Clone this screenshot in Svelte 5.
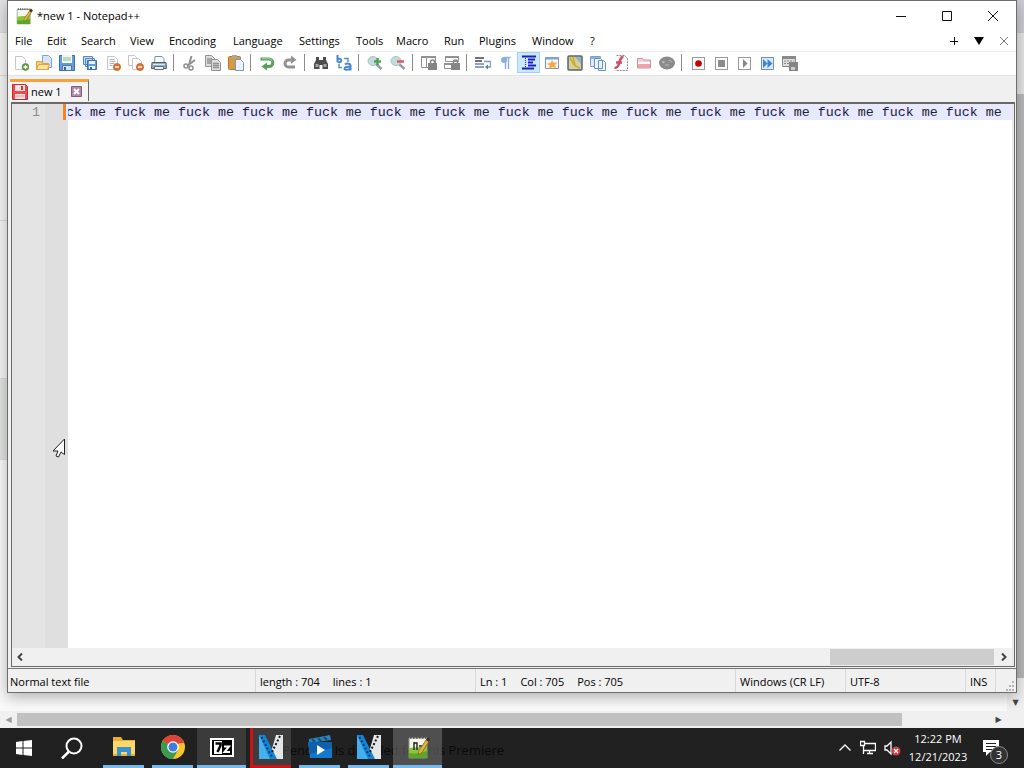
<script lang="ts">
	import { onMount } from 'svelte';

	const menus = [
		'File',
		'Edit',
		'Search',
		'View',
		'Encoding',
		'Language',
		'Settings',
		'Tools',
		'Macro',
		'Run',
		'Plugins',
		'Window',
		'?',
	];

	const page = '<path d="M2.5 1.5h7l3 3v10h-10z" fill="#fdfdfd" stroke="#c4c7cb"/>';
	const minus =
		'<circle cx="12" cy="12" r="3.6" fill="#e0752d" stroke="#a9511c" stroke-width=".6"/><path d="M10 12h4" stroke="#fff" stroke-width="1.4"/>';
	const lens =
		'<path d="M9 9l5.500 5" stroke="#9a9ca8" stroke-width="2.500"/><ellipse cx="6" cy="6" rx="5" ry="4.500" fill="#c3dbdc" stroke="#a9c4c8"/>';
	const lock =
		'<rect x="7" y="8" width="9" height="7" fill="#858585"/><path d="M9.500 8V7a2 2 0 0 1 4 0v1" fill="none" stroke="#858585" stroke-width="1.500"/>';
	const frame = '<rect x="2.500" y="2.500" width="12" height="12" fill="#fff" stroke="#9a9a9a"/>';

	const groups = [
		[
			{
				name: 'New',
				art:
					page +
					'<circle cx="12.500" cy="12" r="3.400" fill="#69a04a" stroke="#47752f" stroke-width=".6"/><path d="M10.500 12h4M12.500 10v4" stroke="#fff" stroke-width="1.300"/>',
			},
			{
				name: 'Open',
				art: '<path d="M6.500.5h6l3 3v9h-9z" fill="#d6e5fb" stroke="#7fa4dc"/><path d="M.5 6.500h5l1 2h6v6H.5z" fill="#f7d171" stroke="#dda43b"/><path d="M.5 14.500l2-5h11l-2 5z" fill="#fde69b" stroke="#dda43b"/>',
			},
			{
				name: 'Save',
				art: '<path d="M.5 .5h15v15H.5z" fill="#659bd6" stroke="#3d6fae"/><path d="M3 0h10v8H3z" fill="#edf5ff"/><path d="M4 3h8M4 5h8" stroke="#8bbf68"/><path d="M3.500 10.500h9v5h-9z" fill="#d2e4f4" stroke="#4776a8"/><path d="M5 12h2v3H5z" fill="#33639f"/>',
			},
			{
				name: 'Save All',
				art: '<path d="M1.500 1.500h9v8h-9zM3.500 3.500h9v8h-9z" fill="#c4daf2" stroke="#5688c3"/><path d="M5.500 5.500h9v9h-9z" fill="#659bd6" stroke="#3d6fae"/><path d="M7 6h6v3H7zM7 11h6v3H7z" fill="#e7f2fb"/><path d="M8 12h2v2H8z" fill="#33639f"/>',
			},
			{
				name: 'Close',
				art: page + '<path d="M4.500 4.500h5M4.500 6.500h6M4.500 8.500h5M4.500 10.500h3" stroke="#b0b4ba"/>' + minus,
			},
			{
				name: 'Close All',
				art:
					'<path d="M.5.5h6l2 2v8h-8z" fill="#fff" stroke="#c4c7cb"/><path d="M4.500 3.500h6l3 3v8h-9z" fill="#fff" stroke="#c4c7cb"/>' +
					minus,
			},
			{
				name: 'Print',
				art: '<path d="M4 1.500h7l2 2v5H3.500z" fill="#f8fbff" stroke="#7792ad"/><path d="M1 7.500h14l.5 6H.5z" fill="#9aabba" stroke="#51606f"/><path d="M2 9.500h12" stroke="#dce6ef"/><path d="M3.500 11.500h9v3h-9z" fill="#e8f1fa" stroke="#5b718a"/>',
			},
		],
		[
			{
				name: 'Cut',
				art: '<path d="M9.500 1L7 10M13 5l-8 6" stroke="#929292" stroke-width="2"/><circle cx="4" cy="11" r="2" fill="none" stroke="#929292" stroke-width="1.600"/><circle cx="9" cy="13" r="2" fill="none" stroke="#929292" stroke-width="1.600"/>',
			},
			{
				name: 'Copy',
				art: '<path d="M.5 .5h6l3 3v8h-9z" fill="#ddd" stroke="#929292"/><path d="M2 4h5M2 6h5M2 8h4" stroke="#929292" stroke-width="1.500"/><path d="M6.500 4.500h6l3 3v8h-9z" fill="#ddd" stroke="#929292"/><path d="M8 8.500h6M8 10.500h6M8 12.500h6" stroke="#929292" stroke-width="1.500"/>',
			},
			{
				name: 'Paste',
				art: '<rect x=".5" y="1.500" width="12" height="13" rx="1" fill="#d99a45" stroke="#b8772a"/><path d="M4 0h5v3H4z" fill="#a8a8a8"/><path d="M7.500 4.500h5l3 3v8h-8z" fill="#eaf3ff" stroke="#7898c4"/>',
			},
		],
		[
			{
				name: 'Undo',
				art: '<path d="M1.500 4h8.500a3.800 3.800 0 0 1 0 7.600H7" fill="none" stroke="#58a058" stroke-width="3"/><path d="M8 7.500v8L2.500 11.500z" fill="#58a058"/><path d="M3 3.700h7a3.500 3.500 0 0 1 3.300 2.500" fill="none" stroke="#a0d39a"/>',
			},
			{
				name: 'Redo',
				art: '<path d="M13 12H6.500a3.500 3.500 0 0 1 0-7H10" fill="none" stroke="#929292" stroke-width="3"/><path d="M9 .5v8.500l5.500-4.200z" fill="#929292"/>',
			},
		],
		[
			{
				name: 'Find',
				art: '<path d="M3 2h3v3h4V2h3v3l2 4v5H9.500v-4h-3v4H1V9l2-4z" fill="#4c4c4c"/><path d="M2.500 9h3v3h-3zM10.500 9h3v3h-3z" fill="#a5a5a5"/>',
			},
			{
				name: 'Replace',
				art: '<path d="M1.500 0v7M1.500 4.500a2 1.800 0 1 1 0 2M9 9.500c2-1.500 5.500-1 5.500 1v5M14.500 12c-3-.5-6 0-6 1.700s4.500 1.500 6-.7" fill="none" stroke="#4a86d1" stroke-width="2"/><path d="M8 3.500h4V7M3 9v3.500h3" fill="none" stroke="#5e96a9" stroke-width="1.500"/>',
			},
		],
		[
			{ name: 'Zoom In', art: lens + '<path d="M7 6.500h7M10.500 3v7" stroke="#4fa356" stroke-width="2.500"/>' },
			{ name: 'Zoom Out', art: lens + '<path d="M7 6.500h7" stroke="#e0596b" stroke-width="2.500"/>' },
		],
		[
			{
				name: 'Synchronize Vertical Scrolling',
				art: '<path d="M.5 1.500h14v11H.5zM5.500 2v10" fill="#fff" stroke="#929292"/><path d="M0 1h15v2H0z" fill="#929292"/>' + lock,
			},
			{
				name: 'Synchronize Horizontal Scrolling',
				art: '<path d="M1.500 1.500h13v5h-13zM.5 8.500h12v5H.5z" fill="#fff" stroke="#929292"/><path d="M1 1h14v2H1zM0 8h9v2H0z" fill="#929292"/>' + lock,
			},
		],
		[
			{
				name: 'Word wrap',
				art: '<path d="M0 3h9M0 6h7" stroke="#444" stroke-width="1.300"/><path d="M0 9h9M0 12h9" stroke="#6b86ad" stroke-width="1.300"/><path d="M9 6.500h6.500V12H12" fill="none" stroke="#7a9cc8" stroke-width="1.300"/><path d="M13 9.500v5L10 12z" fill="#5880b5"/>',
			},
			{
				name: 'Show All Characters',
				art: '<path d="M7.500 2v12M10.500 2v12M6 2.500h6.500" stroke="#8ab1de" stroke-width="1.500"/><circle cx="6" cy="5" r="3" fill="#8ab1de"/>',
			},
			{
				name: 'Show Indent Guide',
				art: '<path d="M1 1.500h14M7 4.500h7M7 7.500h5M7 10.500h8M1 13.500h12" stroke="#1820c4" stroke-width="1.800"/><path d="M4.500 3v10" stroke="#333" stroke-dasharray="1 1"/>',
				pressed: true,
			},
			{
				name: 'User Defined Language',
				art: '<path d="M1.500 2.500h13v11h-13z" fill="#f4f7fc" stroke="#7f93b2"/><path d="M1 2h14v2.500H1z" fill="#7fa3d8"/><path d="M8 5l1.500 2.500h4L11 10l1 3-3.500-1L5 14l.5-3.500L3 8.500l3.500-.5z" fill="#f4ad3c"/>',
			},
			{
				name: 'Document Map',
				art: '<rect x="1" y="1" width="14" height="14" rx="1" fill="#d3d29a" stroke="#56656a" stroke-width="1.500"/><path d="M8 2h6v7z" fill="#8eb3cf"/><path d="M3 3l5 8 5 2M6 2l2 8" fill="none" stroke="#d6a62a" stroke-width="1.500"/>',
			},
			{
				name: 'Document List',
				art: '<path d="M.5 1.500h10v10H.5z" fill="#dbe9fa" stroke="#7f9fc9"/><path d="M1 2h10v2H1z" fill="#8eb2de"/><path d="M4.500 3.500h6l2 2v8h-8zM8.500 5.500h5l2 2v8h-7z" fill="#edf5ff" stroke="#6992c8"/>',
			},
			{
				name: 'Function List',
				art: '<path d="M3.500 .5h8l3 3v12h-12" fill="#fff" stroke="#8b8b8b" stroke-dasharray="2 1"/><path d="M10.500 2c-3-.5-3 2-4 5s-1 6-5 6M3 7.500h6" fill="none" stroke="#d34e60" stroke-width="2.500"/>',
			},
			{
				name: 'Folder as Workspace',
				art: '<path d="M1.500 3.500h5l1 1.500h7v8h-13z" fill="#f7cfd4" stroke="#cc9299"/><path d="M2 7h12v2H2z" fill="#fff"/><path d="M2 9h12v4H2z" fill="#eda2ac"/>',
			},
			{
				name: 'Monitoring',
				art: '<ellipse cx="8" cy="8" rx="8" ry="6.500" fill="#8b8b8b"/><path d="M3 7l2-1v2zM10 5l3 2M6 10h4" fill="none" stroke="#b9b9b9"/>',
			},
		],
		[
			{ name: 'Start Recording', art: frame + '<circle cx="8.500" cy="8.500" r="3.300" fill="#c40000"/>' },
			{ name: 'Stop Recording', art: frame + '<path d="M5 5h7v7H5z" fill="#8c8c8c"/>' },
			{ name: 'Playback', art: frame + '<path d="M7 4v9l4.500-4.500z" fill="#858585"/>' },
			{
				name: 'Run a Macro Multiple Times',
				art: '<path d="M2.500 2.500h12v12h-12z" fill="#dcebfb" stroke="#6f8fb8"/><path d="M4 4v9l4.500-4.500zM8.500 4v9l5-4.500z" fill="#3d83d8"/>',
			},
			{
				name: 'Save Current Recorded Macro',
				art: '<path d="M.5 1.500h13v10H.5z" fill="#ddd" stroke="#8a8a8a"/><path d="M0 1h14v3H0z" fill="#8a8a8a"/><path d="M2 6h10M2 8.500h6" stroke="#8a8a8a" stroke-dasharray="2 1"/><path d="M7 7h9v9H7z" fill="#858585"/><path d="M9 12h4v3H9z" fill="#ccc"/>',
			},
		],
	];

	const notepad =
		'<path d="M3 3h18v20H3z" fill="#f3f6ec" stroke="#8d9880"/><path d="M3 13c6-1 12 0 18-3v13H3z" fill="#8cc63a"/><path d="M3 18c6 1 12 0 18-2v7H3z" fill="#5ea52a"/><path d="M4 2.500h16" stroke="#555" stroke-width="2.500" stroke-dasharray="1.500 1.500"/>';
	const pencil =
		'<path d="M22 2l2.500 2-9 14-3.500 1.500 1-4z" fill="#e9b33c" stroke="#7b6428" stroke-width=".8"/><path d="M22 2l2.500 2-2 3-2.500-2z" fill="#333"/>';
	const film =
		'<path d="M17 0h7v24H10z" fill="#e3e5e6"/><path d="M0 0h6l12 24H0z" fill="#1583d6"/><path d="M0 0l11 24H0z" fill="#45b0f0"/><path d="M2.500 2l11 21" stroke="#0a3a62" stroke-width="2" stroke-dasharray="2 2"/><path d="M21 1l-8 16" stroke="#16191b" stroke-width="2" stroke-dasharray="2 2"/>';

	const apps = [
		{
			name: 'File Explorer',
			state: 'open',
			art: '<path d="M1 2h8l2 3h12v16H1z" fill="#e9ae35"/><path d="M1 6h22v13H1z" fill="#fbd867"/><path d="M5 12h14v9h-4v-4H9v4H5z" fill="#3e91cf"/>',
		},
		{
			name: 'Google Chrome',
			state: 'open',
			art: '<circle cx="12" cy="12" r="12" fill="#f8c727"/><path d="M12 12L1.600 6a12 12 0 0 1 20.800 0z" fill="#dd4437"/><path d="M12 12L1.600 6A12 12 0 0 0 12 24l5-9z" fill="#3a9a50"/><path d="M11 6h11.400L23 8H12z" fill="#dd4437"/><circle cx="12" cy="12" r="5.800" fill="#fff"/><circle cx="12" cy="12" r="4.500" fill="#3e7de0"/>',
		},
		{
			name: '7-Zip',
			state: 'open lit',
			art: '<path d="M1 4h22v17H1z" fill="#000" stroke="#fff" stroke-width="2"/><path d="M4 6h8v13H4z" fill="#fff"/><path d="M5.500 8.500h5v2L7.500 17" fill="none" stroke="#000" stroke-width="2.500"/><path d="M14 11.500h5l-4.500 5.500H20" fill="none" stroke="#fff" stroke-width="2"/>',
		},
		{ name: 'Video Editor', state: 'alert', art: film },
		{
			name: 'Video Player',
			state: 'open',
			art: '<path d="M1 4l21-4 1 5L1 8z" fill="#2a83bc"/><path d="M4 4l3 3M10 3l3 3M16 2l3 3" stroke="#14507d" stroke-width="2"/><path d="M0 7h24v16H2z" fill="#1478cc"/><path d="M0 7h24v6L2 19z" fill="#0e60aa"/><path d="M9 10v10l8-5z" fill="#fff"/>',
		},
		{ name: 'Video Editor 2', state: 'open', art: film },
		{
			name: 'Notepad++',
			state: 'open active',
			art: notepad + '<path d="M8 7v8M8 8h3v7M13 11h3M17 11h3" fill="none" stroke="#222" stroke-width="1.400"/>' + pencil,
		},
	];

	const text = 'fuck me '.repeat(88);
	let editor: HTMLTextAreaElement;

	onMount(() => {
		editor.scrollLeft = editor.scrollWidth;
	});
</script>

<div class="screen">
	<main class="desktop">
		<div class="backdrop">
			<div class="panes">
				<div class="left-pane"><i></i><i></i><i></i><i></i><i></i></div>
				<div class="back-scroll"><i></i><i></i><span>▼</span></div>
			</div>
			<div class="back-hscroll">
				<span class="dim">◀</span>
				<div class="track"><div class="thumb"></div></div>
				<span>▶</span>
			</div>
		</div>

		<section class="window">
			<header class="title">
				<svg viewBox="0 0 25 24" width="18" height="18">{@html notepad + pencil}</svg>
				<h1>*new 1 - Notepad++</h1>
				<button aria-label="Minimize"><svg width="12" height="12"><path d="M1 6.500h10" /></svg></button>
				<button aria-label="Maximize"><svg width="12" height="12"><path d="M1.500 1.500h9v9h-9z" /></svg></button>
				<button aria-label="Close window"><svg width="12" height="12"><path d="M1 1l10 10M11 1L1 11" /></svg></button>
			</header>

			<nav class="menu">
				{#each menus as menu}
					<button>{menu}</button>
				{/each}
				<div class="menu-end">
					<button aria-label="New tab"><svg width="10" height="10"><path d="M1 5.500h8M5.500 1v8" /></svg></button>
					<button aria-label="Tab list"><svg width="10" height="10"><path class="solid" d="M0 1h10L5 9z" /></svg></button>
					<button aria-label="Close tab" class="faded"><svg width="10" height="10"><path d="M1 1l8 8M9 1L1 9" /></svg></button>
				</div>
			</nav>

			<div class="toolbar">
				{#each groups as tools}
					<div class="group">
						{#each tools as tool}
							<button aria-label={tool.name} class:pressed={tool.pressed}>
								<svg viewBox="0 0 16 16" width="16" height="16">{@html tool.art}</svg>
							</button>
						{/each}
					</div>
				{/each}
			</div>

			<div class="tabs">
				<div class="tab">
					<svg viewBox="0 0 16 16" width="16" height="16">
						<path d="M.5.5h13l2 2v13H.5z" fill="#ef4b4f" stroke="#c52a30" />
						<path d="M3 1h10v6H3zM3 10h10v5H3z" fill="#fbe3e3" />
						<path d="M9 2h2v4H9z" fill="#d33" />
						<path d="M4 12h8" stroke="#ef8a8a" />
					</svg>
					<span>new 1</span>
					<button aria-label="Close new 1">
						<svg viewBox="0 0 11 11" width="11" height="11">
							<path d="M.5.5h10v10H.5z" fill="#b08aa6" stroke="#865a7d" />
							<path d="M3 3l5 5M8 3L3 8" stroke="#fff" stroke-width="2" />
						</svg>
					</button>
				</div>
			</div>

			<div class="editor">
				<div class="code">
					<div class="gutter"><span>1</span></div>
					<div class="fold"><i></i></div>
					<textarea bind:this={editor} aria-label="new 1" wrap="off" spellcheck="false" value={text}></textarea>
				</div>
				<div class="hscroll">
					<svg width="6" height="8"><path d="M5 0.500L1.500 4L5 7.500" /></svg>
					<div class="track"><div class="thumb"></div></div>
					<svg width="6" height="8"><path d="M1 0.500L4.500 4L1 7.500" /></svg>
				</div>
			</div>

			<footer class="status">
				<span class="type">Normal text file</span>
				<span class="size"><span>length : 704</span><span>lines : 1</span></span>
				<span class="pos"><span>Ln : 1</span><span>Col : 705</span><span>Pos : 705</span></span>
				<span class="eol">Windows (CR LF)</span>
				<span class="enc">UTF-8</span>
				<span class="ins">INS</span>
				<svg class="grip" width="12" height="12">
					<path d="M8 2h2M5 6h2M8 6h2M2 10h2M5 10h2M8 10h2" stroke="#b5b5b5" stroke-width="2" />
				</svg>
			</footer>
		</section>

		<svg class="pointer" viewBox="0 0 14 20" width="14" height="20">
			<path d="M12.500 1v15.500l-3.500-2.500-2.500 5-2.500-1 2-5H1z" fill="#fff" stroke="#222" />
		</svg>
	</main>

	<footer class="taskbar">
		<button class="start" aria-label="Start">
			<svg viewBox="0 0 16 16" width="16" height="16">
				<path d="M0 2l6.500-1v6.500H0zM7.500.9L16 0v7.500H7.500zM0 8.500h6.500V15L0 14zM7.500 8.500H16V16l-8.500-1z" fill="#fff" />
			</svg>
		</button>
		<button class="search" aria-label="Search">
			<svg viewBox="0 0 22 22" width="22" height="22">
				<circle cx="13" cy="9" r="7.500" fill="none" stroke="#fff" stroke-width="2" />
				<path d="M8 14.500L1 21.500" stroke="#fff" stroke-width="2.500" />
			</svg>
		</button>
		<div class="apps">
			<span class="ghost">Pending is disabled for this Premiere</span>
			{#each apps as app}
				<button class="app {app.state}" aria-label={app.name}>
					<svg viewBox="0 0 24 24" width="24" height="24">{@html app.art}</svg>
				</button>
			{/each}
		</div>
		<div class="tray">
			<svg width="14" height="10"><path d="M1.500 7.500L7 2l5.500 5.500" /></svg>
			<svg width="16" height="16">
				<path d="M5 3.500h10.500v7H3.500V6M7 13.500h6M9.500 11v2M.5 1.500h4v4h-4zM3.500 10v4" />
			</svg>
			<svg width="17" height="16">
				<path d="M1 6h2l4-4v12l-4-4H1z" />
				<circle cx="12" cy="11" r="4.500" fill="#d13a48" stroke="none" />
				<path d="M10 9l4 4M14 9l-4 4" />
			</svg>
		</div>
		<div class="clock"><time>12:22 PM</time><time>12/21/2023</time></div>
		<button class="notes" aria-label="3 notifications">
			<svg width="18" height="18">
				<path d="M1 1h16v12H8l-4 4v-4H1z" fill="#fff" />
				<path d="M4 4.500h10M4 7.500h10M4 10.500h6" stroke="#222" />
			</svg>
			<span>3</span>
		</button>
	</footer>
</div>

<style>
	:global(body) {
		margin: 0;
		overflow: hidden;
	}
	.screen {
		display: flex;
		flex-direction: column;
		height: 100vh;
		font: 11px/16px 'Open Sans', 'Noto Sans', sans-serif;
		color: #000;
		background: #f2f2f2;
	}
	button {
		display: flex;
		align-items: center;
		justify-content: center;
		padding: 0;
		border: 0;
		background: none;
		font: inherit;
		color: inherit;
	}
	svg {
		display: block;
		flex: none;
	}

	.desktop {
		position: relative;
		flex: 1;
		min-height: 0;
	}
	.backdrop {
		display: flex;
		flex-direction: column;
		height: 100%;
	}
	.panes {
		flex: 1;
		display: flex;
		justify-content: space-between;
		background: #fafafa;
	}
	.left-pane {
		width: 8px;
		display: grid;
		grid-template-rows: 33px 43px 145px 158px 81px;
	}
	.left-pane i {
		border-bottom: 1px solid #dcdcdc;
		background: #f6f7f5;
	}
	.left-pane i:first-child {
		background: #e2e2e4;
	}
	.left-pane i:last-child {
		background: #e2e4e2;
	}
	.back-scroll {
		width: 17px;
		display: grid;
		grid-template-rows: 94px 1fr 33px;
		background: #f0f0f0;
	}
	.back-scroll i:first-child {
		background: linear-gradient(#ccccd2 33px, #e6e6e6 33px);
	}
	.back-scroll i:nth-child(2) {
		background: #b9b9b9;
	}
	.back-scroll span,
	.back-hscroll span {
		font: 8px/17px 'DejaVu Sans', sans-serif;
		text-align: center;
		color: #444;
	}
	.back-scroll span {
		align-self: end;
	}
	.back-hscroll {
		display: grid;
		grid-template-columns: 17px 1fr 17px 17px;
		height: 17px;
		background: #f0f0f0;
	}
	.back-hscroll .dim {
		color: #999;
	}
	.back-hscroll .thumb {
		width: 91%;
		height: 13px;
		margin-top: 2px;
		background: #c1c1c1;
	}

	.window {
		position: absolute;
		inset: 0 7px 35px;
		display: flex;
		flex-direction: column;
		border: 1px solid #6d6d6d;
		background: #f0f0f0;
		box-shadow: 0 4px 14px rgba(0, 0, 0, 0.3);
	}
	.title {
		display: flex;
		align-items: center;
		height: 29px;
		padding-left: 7px;
		background: #fff;
	}
	.title h1 {
		flex: 1;
		margin: 0 0 0 4px;
		font-size: 11px;
		font-weight: 400;
	}
	.title button {
		width: 46px;
		height: 29px;
	}
	.title button svg,
	.menu svg {
		fill: none;
		stroke: #111;
	}
	.menu {
		display: grid;
		grid-template-columns: 32px 34px 49px 39px 64px 66px 57px 40px 48px 35px 53px 58px 20px 1fr;
		align-items: center;
		height: 21px;
		padding-left: 7px;
		background: #fff;
		border-bottom: 1px solid #eee;
	}
	.menu > button {
		justify-content: flex-start;
	}
	.menu-end {
		display: flex;
		justify-content: flex-end;
	}
	.menu-end button {
		width: 25px;
	}
	.menu .solid {
		fill: #000;
		stroke: none;
	}
	.menu .faded svg {
		stroke: #777;
	}

	.toolbar {
		display: flex;
		align-items: flex-start;
		height: 23px;
		padding-left: 1px;
		background: #fff;
		border-bottom: 1px solid #e2e2e2;
	}
	.group {
		display: flex;
		align-items: center;
	}
	.group + .group::before {
		content: '';
		width: 1px;
		height: 17px;
		margin: 0 4px 0 3px;
		background: #8b8b8b;
	}
	.group button {
		width: 23px;
		height: 21px;
	}
	.group .pressed {
		background: #cce8ff;
		box-shadow: inset 0 0 0 1px #99d1ff;
	}

	.tabs {
		display: flex;
		align-items: flex-start;
		height: 23px;
		padding: 3px 0 0 2px;
	}
	.tab {
		display: flex;
		align-items: center;
		gap: 3px;
		width: 76px;
		height: 19px;
		padding-left: 2px;
		border-top: 3px solid #f9a03c;
		border-right: 1px solid #696969;
		background: #f4f4f4;
	}
	.tab span {
		flex: 1;
	}
	.tab button {
		margin-right: 6px;
	}

	.editor {
		flex: 1;
		display: flex;
		flex-direction: column;
		min-height: 0;
		margin: 0 1px 1px 3px;
		border: 1px solid #696969;
		border-top-width: 2px;
		padding-right: 2px;
		background: #e9e9e9;
	}
	.code {
		flex: 1;
		display: flex;
		min-height: 0;
		background: linear-gradient(#e8e8ff 16px, #fff 16px);
	}
	.gutter {
		width: 28px;
		padding-right: 5px;
		background: #e4e4e4;
		font: 10pt/18px 'Liberation Mono', monospace;
		text-align: right;
		color: #8d8d8d;
	}
	.fold {
		width: 23px;
		background: #dfdfdf;
	}
	.fold i {
		display: block;
		width: 3px;
		height: 16px;
		margin-left: 18px;
		border-right: 2px solid #e8e8ff;
		background: #f0852a;
	}
	textarea {
		flex: 1;
		min-width: 0;
		margin-right: 2px;
		padding: 0;
		border: 0;
		outline: 0;
		resize: none;
		overflow: hidden;
		background: none;
		font: 10pt/18px 'Liberation Mono', 'Courier New', monospace;
		white-space: pre;
		color: #202038;
	}
	.hscroll {
		display: flex;
		align-items: center;
		gap: 7px;
		height: 18px;
		padding: 0 5px;
		background: #f0f0f0;
	}
	.hscroll .track {
		flex: 1;
	}
	.hscroll .thumb {
		width: 17%;
		height: 16px;
		margin-left: auto;
		background: #cdcdcd;
	}
	.hscroll svg {
		fill: none;
		stroke: #444;
		stroke-width: 2;
	}

	.status {
		display: grid;
		grid-template-columns: 248px 220px 1fr 110px 120px 30px 20px;
		height: 23px;
		line-height: 26px;
		border-top: 1px solid #777;
	}
	.status > span {
		height: 23px;
		padding-left: 4px;
		border-right: 1px solid #d9d9d9;
		white-space: nowrap;
	}
	.status .type {
		padding-left: 2px;
	}
	.size,
	.pos {
		display: flex;
		gap: 13px;
	}
	.grip {
		align-self: end;
		justify-self: end;
	}

	.pointer {
		position: absolute;
		left: 52px;
		top: 438px;
	}

	.taskbar {
		display: flex;
		height: 40px;
		color: #fff;
		background: #212121;
	}
	.start,
	.search {
		width: 48px;
	}
	.apps {
		position: relative;
		flex: 1;
		display: flex;
		padding-left: 3px;
	}
	.ghost {
		position: absolute;
		left: 186px;
		top: 14px;
		font-size: 13px;
		white-space: nowrap;
		color: #0a0a0a;
	}
	.app {
		box-sizing: border-box;
		position: relative;
		width: 41px;
		margin: 0 4px;
		border-bottom: 3px solid #76b9ed;
	}
	.lit {
		width: 49px;
		margin: 0;
		background: rgba(90, 90, 90, 0.45);
	}
	.active {
		width: 49px;
		margin: 0;
		background: rgba(110, 110, 110, 0.6);
	}
	.alert {
		border-left: 3px solid #d01217;
		border-bottom-color: #d01217;
		background: rgba(90, 90, 90, 0.5);
	}
	.alert svg {
		margin-right: 3px;
	}
	.tray {
		display: flex;
		align-items: center;
		gap: 8px;
	}
	.tray svg {
		fill: none;
		stroke: #fff;
		stroke-width: 1.3;
	}
	.clock {
		display: flex;
		flex-direction: column;
		align-items: center;
		justify-content: center;
		width: 74px;
		line-height: 18px;
	}
	.notes {
		position: relative;
		width: 49px;
		justify-content: flex-start;
		padding-left: 7px;
	}
	.notes span {
		position: absolute;
		left: 15px;
		top: 18px;
		width: 16px;
		border: 1px solid #8a8a8a;
		border-radius: 50%;
		line-height: 16px;
		background: #333;
	}
</style>
